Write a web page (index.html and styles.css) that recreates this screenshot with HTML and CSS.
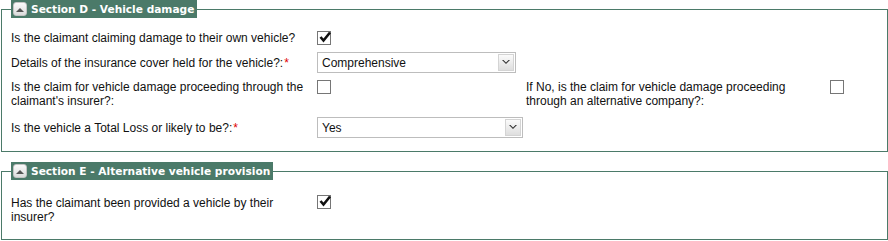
FILE: index.html
```html
<!DOCTYPE html>
<html lang="en">
<head>
    <meta charset="UTF-8">
    <meta name="viewport" content="width=device-width, initial-scale=1.0">
    <title>Claim sections</title>
    <link rel="stylesheet" href="styles.css">
</head>
<body>
    <div id="main">
        <fieldset class="section section-d">
            <legend>
                <span class="toggle"><svg width="8" height="5" viewBox="0 0 8 5"><path d="M0 5 L4 1 L8 5 Z" fill="#555"/></svg></span>
                Section D - Vehicle damage
            </legend>
            <div class="row">
                <label>Is the claimant claiming damage to their own vehicle?</label>
                <span class="check checked"><svg width="14" height="14" viewBox="0 0 14 14"><path d="M2.5 7 L5.5 10.5 L12 2.5" fill="none" stroke="#111" stroke-width="2.6"/></svg></span>
            </div>
            <div class="row">
                <label>Details of the insurance cover held for the vehicle?:<span class="req">*</span></label>
                <div class="select">
                    <span class="value">Comprehensive</span>
                    <span class="arrow"><svg width="8" height="5" viewBox="0 0 8 5"><path d="M0 0 L4 4 L8 0 L6.5 0 L4 2.5 L1.5 0 Z" fill="#333"/></svg></span>
                </div>
            </div>
            <div class="row row-top">
                <label>Is the claim for vehicle damage proceeding through the claimant's insurer?:</label>
                <span class="check"></span>
                <label class="right-label">If No, is the claim for vehicle damage proceeding through an alternative company?:</label>
                <span class="check"></span>
            </div>
            <div class="row">
                <label>Is the vehicle a Total Loss or likely to be?:<span class="req">*</span></label>
                <div class="select wide">
                    <span class="value">Yes</span>
                    <span class="arrow"><svg width="8" height="5" viewBox="0 0 8 5"><path d="M0 0 L4 4 L8 0 L6.5 0 L4 2.5 L1.5 0 Z" fill="#333"/></svg></span>
                </div>
            </div>
        </fieldset>

        <fieldset class="section section-e">
            <legend>
                <span class="toggle"><svg width="8" height="5" viewBox="0 0 8 5"><path d="M0 5 L4 1 L8 5 Z" fill="#555"/></svg></span>
                Section E - Alternative vehicle provision
            </legend>
            <div class="row row-top">
                <label class="nudge">Has the claimant been provided a vehicle by their insurer?</label>
                <span class="check checked"><svg width="14" height="14" viewBox="0 0 14 14"><path d="M2.5 7 L5.5 10.5 L12 2.5" fill="none" stroke="#111" stroke-width="2.6"/></svg></span>
            </div>
        </fieldset>
    </div>
</body>
</html>
```

FILE: styles.css
```css
body
{
    margin: 0;
    background-color: #fff;
    font-family: "Liberation Sans", Arial, sans-serif;
    font-size: 12px;
    line-height: 14px;
    color: #111;
}
#main
{
    width: 888px;
}
.section
{
    margin: 0 0 0 1px;
    width: 887px;
    box-sizing: border-box;
    border: 1px solid #4b7a69;
    padding: 13px 9px 13px 9px;
    min-inline-size: 0;
}
.section-e
{
    margin-top: 10px;
    padding-top: 15px;
    padding-bottom: 15px;
}
.section legend
{
    background-color: #4b7a69;
    color: #fff;
    font-family: "DejaVu Sans", Verdana, sans-serif;
    font-size: 10.6px;
    font-weight: bold;
    height: 18px;
    padding: 0 3px 0 2px;
    display: flex;
    align-items: center;
    gap: 4px;
    margin-left: 0;
}
.toggle
{
    width: 12px;
    height: 12px;
    border: 1px solid #c4c4c4;
    border-radius: 3px;
    background: linear-gradient(#fafafa, #dcdcdc);
    display: flex;
    align-items: center;
    justify-content: center;
}
.row
{
    display: grid;
    grid-template-columns: 306px 209px 304px auto;
    align-items: center;
    margin-bottom: 7px;
}
.row:last-child
{
    margin-bottom: 0;
}
.row-top
{
    align-items: start;
    margin-bottom: 9px;
}
.row label
{
    padding-right: 4px;
}
.nudge
{
    padding-top: 1px;
}
.req
{
    color: #e00000;
    margin-left: 1px;
}
.check
{
    width: 12px;
    height: 12px;
    border: 1px solid #767676;
    background-color: #fff;
    position: relative;
}
.check svg
{
    position: absolute;
    left: 0;
    top: -2px;
}
.select
{
    width: 199px;
    height: 21px;
    box-sizing: border-box;
    border: 1px solid #bdbdbd;
    background-color: #fff;
    display: flex;
    align-items: center;
    justify-content: space-between;
}
.select.wide
{
    width: 206px;
}
.select .value
{
    padding-left: 4px;
}
.arrow
{
    width: 16px;
    height: 17px;
    margin-right: 1px;
    border: 1px solid #d4d4d4;
    background: linear-gradient(#fbfbfb, #dedede);
    display: flex;
    align-items: center;
    justify-content: center;
    box-sizing: border-box;
}
```
